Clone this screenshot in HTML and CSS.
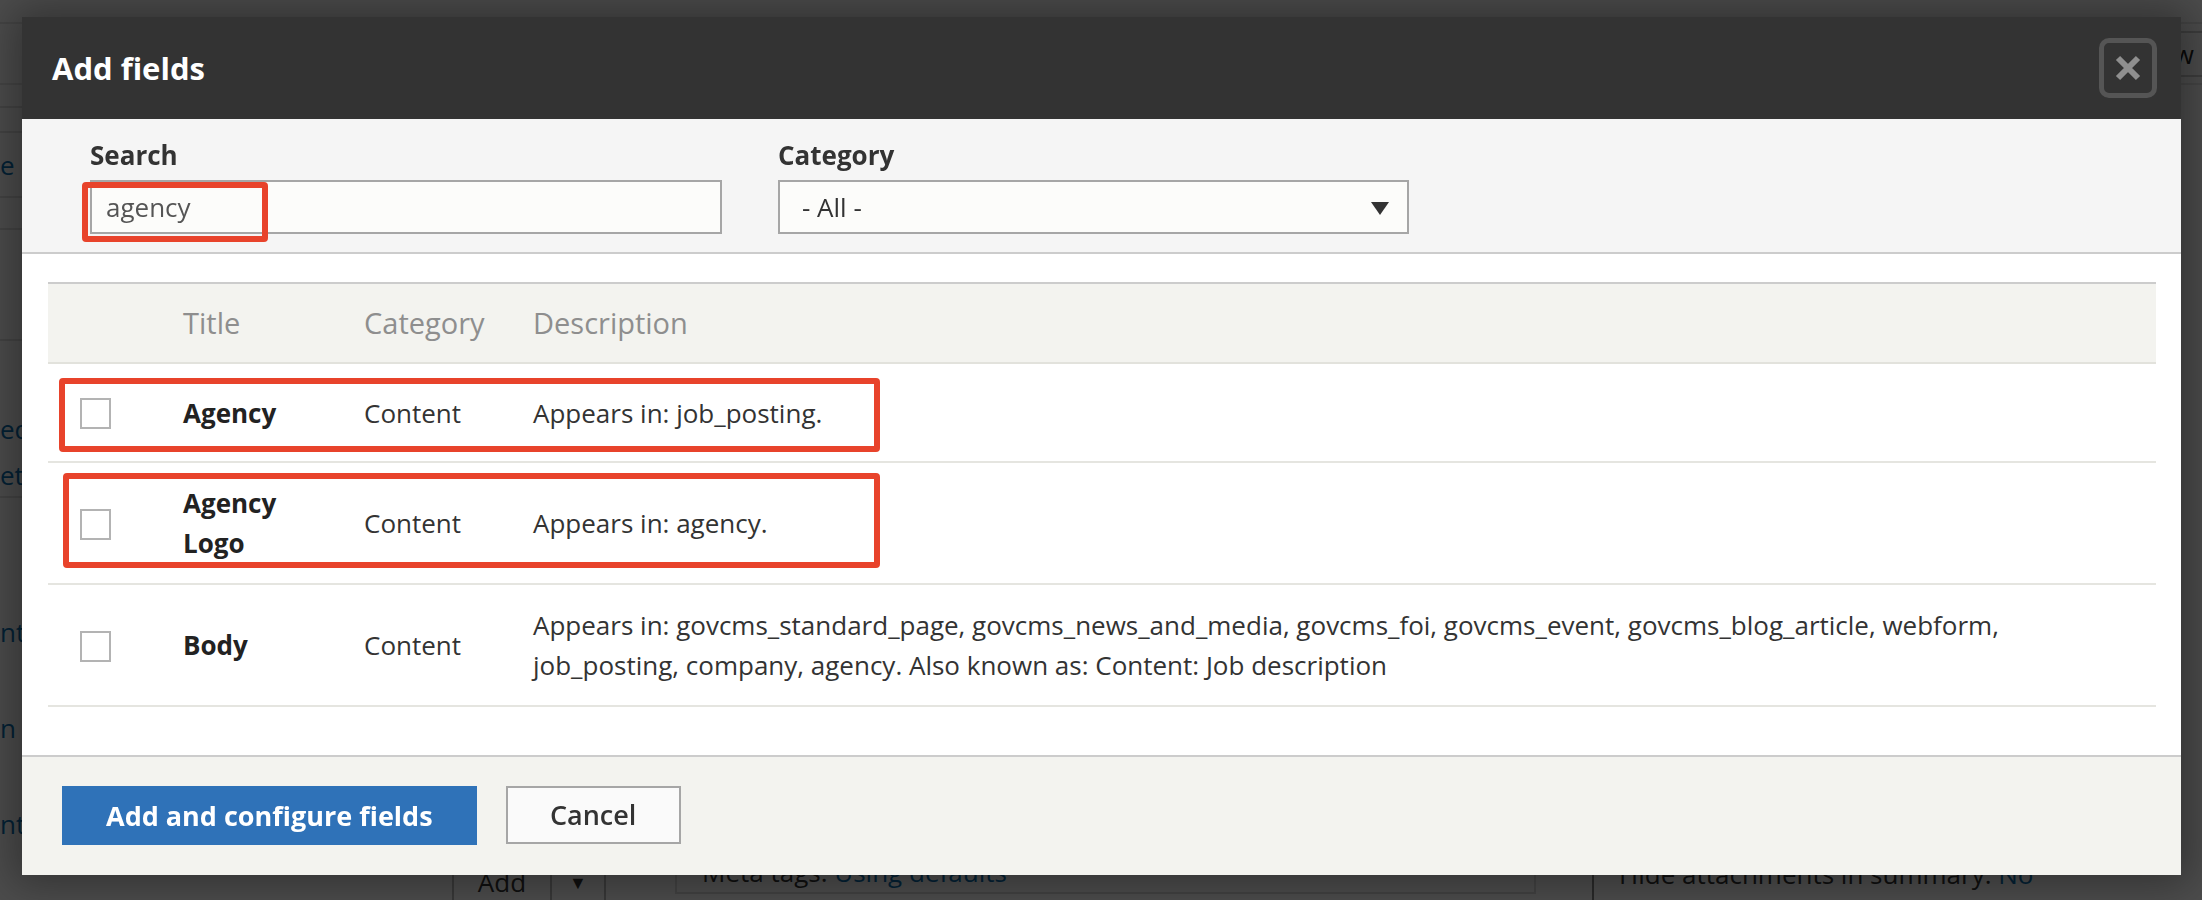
FILE: index.html
```html
<!DOCTYPE html>
<html lang="en">
<head>
<meta charset="utf-8">
<title>Add fields</title>
<link rel="stylesheet" href="styles.css">
</head>
<body>
<div class="page">
  <div class="bg-topbar"></div>
  <div class="bg-toolbar"><span class="bg-btn">Preview</span></div>
  <div class="bg-main">
    <div class="bg-side">
      <div class="bg-row r1"></div>
      <div class="bg-row r2"></div>
      <div class="bg-row r3"><a>e</a></div>
      <div class="bg-row r4"></div>
      <div class="bg-row r5"></div>
      <div class="bg-row r6"><a>ed</a><a>ett</a></div>
      <div class="bg-row r7"><a>nte</a><a>n</a><a>nte</a></div>
    </div>
    <div class="bg-content">
      <div class="bg-bottom">
        <div class="bg-split"><span class="bg-add">Add</span><span class="bg-caret">▼</span></div>
        <div class="bg-meta">Meta tags: <a>Using defaults</a></div>
        <div class="bg-side-panel">Hide attachments in summary: <a>No</a></div>
      </div>
    </div>
  </div>
</div>
<div class="overlay"></div>

<div class="dialog" role="dialog" aria-labelledby="dlg-title">
  <div class="dialog-header">
    <h1 class="dialog-title" id="dlg-title">Add fields</h1>
    <button class="close" type="button" aria-label="Close">
      <svg width="26" height="26" viewBox="0 0 26 26" aria-hidden="true">
        <path d="M3 3 L23 23 M23 3 L3 23" stroke="#8f8f8f" stroke-width="6" fill="none"/>
      </svg>
    </button>
  </div>

  <div class="filters">
    <div class="field">
      <label for="search">Search</label>
      <input class="text-input" id="search" type="text" value="agency">
      <span class="mark mark-search"></span>
    </div>
    <div class="field">
      <label>Category</label>
      <div class="select">
        <span>- All -</span>
        <svg class="select-arrow" width="18" height="13" viewBox="0 0 18 13" aria-hidden="true"><path d="M0 0 H18 L9 13 Z" fill="#333"/></svg>
      </div>
    </div>
  </div>

  <div class="content">
    <table class="fields">
      <colgroup>
        <col class="c-check"><col class="c-title"><col class="c-cat"><col>
      </colgroup>
      <thead>
        <tr><th></th><th>Title</th><th>Category</th><th>Description</th></tr>
      </thead>
      <tbody>
        <tr>
          <td class="cell-check"><input type="checkbox" class="cb"></td>
          <td class="cell-title">Agency</td>
          <td>Content</td>
          <td>Appears in: job_posting.</td>
        </tr>
        <tr>
          <td class="cell-check"><input type="checkbox" class="cb"></td>
          <td class="cell-title">Agency Logo</td>
          <td>Content</td>
          <td>Appears in: agency.</td>
        </tr>
        <tr>
          <td class="cell-check"><input type="checkbox" class="cb"></td>
          <td class="cell-title">Body</td>
          <td>Content</td>
          <td>Appears in: govcms_standard_page, govcms_news_and_media, govcms_foi, govcms_event, govcms_blog_article, webform, job_posting, company, agency. Also known as: Content: Job description</td>
        </tr>
      </tbody>
    </table>
    <span class="mark mark-row1"></span>
    <span class="mark mark-row2"></span>
  </div>

  <div class="actions">
    <button class="btn btn-primary" type="button">Add and configure fields</button>
    <button class="btn btn-secondary" type="button">Cancel</button>
  </div>
</div>
</body>
</html>
```

FILE: styles.css
```css
* { box-sizing: border-box; }

html, body {
  margin: 0;
  padding: 0;
  width: 2202px;
  height: 900px;
  overflow: hidden;
}

body {
  font-family: "Open Sans", "Noto Sans", "Liberation Sans", sans-serif;
  background: #ffffff;
  color: #333;
}

/* ---------- page behind the dialog ---------- */
.page {
  width: 2202px;
  height: 900px;
  display: flex;
  flex-direction: column;
  background: #fff;
  font-size: 26px;
  line-height: 40px;
}

.page a { color: #0a6fb0; display: block; }

.bg-topbar {
  height: 25px;
  border-bottom: 2px solid #e6e6e6;
}

.bg-toolbar {
  height: 62px;
  display: flex;
  justify-content: flex-end;
  align-items: center;
  border-bottom: 2px solid #e6e6e6;
}

.bg-btn {
  height: 46px;
  margin-right: -8px;
  padding: 0 14px;
  border: 2px solid #ccc;
  line-height: 42px;
  color: #222;
}

.bg-main {
  flex: 1;
  display: flex;
}

.bg-side {
  width: 166px;
  display: flex;
  flex-direction: column;
}

.bg-row { border-bottom: 2px solid #e0e0e0; }
.bg-row.r1 { height: 23px; }
.bg-row.r2 { height: 25px; }
.bg-row.r3 { height: 65px; padding-top: 12px; }
.bg-row.r4 { height: 32px; }
.bg-row.r5 { height: 111px; }
.bg-row.r6 { height: 157px; padding-top: 68px; }
.bg-row.r6 a:last-child { margin-top: 6px; }
.bg-row.r7 { flex: 1; border-bottom: none; padding-top: 114px; }
.bg-row.r7 a { margin-bottom: 56px; }

.bg-content {
  flex: 1;
  display: flex;
  flex-direction: column;
  justify-content: flex-end;
}

.bg-bottom {
  height: 50px;
  display: flex;
  align-items: flex-start;
  padding-left: 286px;
}

.bg-split {
  display: flex;
  height: 50px;
  border: 2px solid #bbb;
  margin-top: 15px;
}
.bg-add { width: 98px; text-align: center; border-right: 2px solid #bbb; line-height: 30px; }
.bg-caret { width: 52px; text-align: center; font-size: 18px; line-height: 30px; }

.bg-meta {
  width: 861px;
  margin-left: 69px;
  padding-left: 25px;
  padding-top: 15px;
  height: 44px;
  border: 2px solid #ddd;
  border-top: none;
  line-height: 14px;
}
.bg-meta a, .bg-side-panel a { display: inline; }

.bg-side-panel {
  margin-left: 56px;
  padding-left: 25px;
  padding-top: 15px;
  border-left: 2px solid #888;
  height: 50px;
  line-height: 18px;
}

.overlay {
  position: fixed;
  inset: 0;
  background: rgba(0, 0, 0, 0.7);
}

/* ---------- dialog ---------- */
.dialog {
  position: fixed;
  left: 22px;
  top: 17px;
  width: 2159px;
  height: 858px;
  display: flex;
  flex-direction: column;
  background: #fff;
  box-shadow: 0 0 40px 10px rgba(0, 0, 0, 0.35);
}

.dialog-header {
  height: 102px;
  flex: none;
  background: #333333;
  display: flex;
  align-items: center;
  justify-content: space-between;
  padding: 0 24px 0 30px;
}

.dialog-title {
  margin: 0;
  color: #fff;
  font-size: 31px;
  font-weight: 700;
  line-height: 40px;
}

.close {
  width: 58px;
  height: 60px;
  padding: 0;
  border: 5px solid #555555;
  border-radius: 10px;
  background: #333333;
  display: flex;
  align-items: center;
  justify-content: center;
  cursor: pointer;
}

/* filters */
.filters {
  flex: none;
  height: 135px;
  background: #f5f5f5;
  border-bottom: 2px solid #cccccc;
  padding: 16px 0 18px 68px;
  display: flex;
  gap: 56px;
}

.field {
  position: relative;
  display: flex;
  flex-direction: column;
}

.field label {
  display: block;
  font-size: 26px;
  font-weight: 700;
  line-height: 40px;
  color: #333;
  margin-bottom: 5px;
}

.text-input,
.select {
  width: 632px;
  height: 55px;
  border: 2px solid #a6a6a6;
  border-radius: 0;
  background: #fcfcfa;
  font-family: "Open Sans", "Noto Sans", sans-serif;
  font-size: 26px;
  color: #555;
}

.text-input {
  padding: 0 14px;
  outline: none;
}

.select {
  width: 631px;
  display: flex;
  align-items: center;
  justify-content: space-between;
  padding: 0 18px 0 22px;
  color: #333;
}

.select-arrow { margin-top: 2px; }

/* table */
.content {
  flex: 1;
  position: relative;
  background: #fff;
  padding: 28px 25px 0 26px;
}

.fields {
  width: 100%;
  table-layout: fixed;
  border-collapse: separate;
  border-spacing: 0;
}

.c-check { width: 135px; }
.c-title { width: 181px; }
.c-cat { width: 169px; }

.fields th {
  height: 82px;
  padding: 0;
  background: #f3f3ef;
  border-top: 2px solid #cccccc;
  border-bottom: 2px solid #e2e2dc;
  text-align: left;
  font-weight: 400;
  font-size: 29px;
  line-height: 44px;
  color: #8e8e8e;
  vertical-align: middle;
}

.fields td {
  height: 99px;
  padding: 20px 24px 20px 0;
  border-bottom: 2px solid #e5e5e0;
  font-size: 26px;
  line-height: 40px;
  color: #333;
  vertical-align: middle;
}

.fields td.cell-check { padding-left: 32px; }

.fields td.cell-title {
  font-weight: 700;
  color: #222;
}

.cb {
  appearance: none;
  -webkit-appearance: none;
  display: block;
  width: 31px;
  height: 31px;
  margin: 2px 0 0;
  border: 2px solid #b3b3b3;
  background: #fff;
}

/* annotation boxes */
.mark {
  position: absolute;
  border: 6px solid #e8432b;
  border-radius: 4px;
  pointer-events: none;
}

.mark-search { left: -8px; top: 47px; width: 186px; height: 60px; }
.mark-row1 { left: 37px; top: 124px; width: 821px; height: 74px; }
.mark-row2 { left: 41px; top: 219px; width: 817px; height: 95px; }

/* actions */
.actions {
  flex: none;
  height: 120px;
  border-top: 2px solid #cccccc;
  background: #f3f3ef;
  padding: 29px 0 0 40px;
  display: flex;
  align-items: flex-start;
  gap: 29px;
}

.btn {
  font-family: "Open Sans", "Noto Sans", sans-serif;
  font-size: 27px;
  line-height: 36px;
  border-radius: 0;
  cursor: pointer;
}

.btn-primary {
  height: 59px;
  padding: 0 44px;
  border: none;
  background: #2f72b8;
  color: #fff;
  font-weight: 700;
}

.btn-secondary {
  height: 58px;
  width: 175px;
  padding: 0;
  border: 2px solid #a6a6a6;
  background: #fafafa;
  color: #333;
  font-weight: 600;
}
```
